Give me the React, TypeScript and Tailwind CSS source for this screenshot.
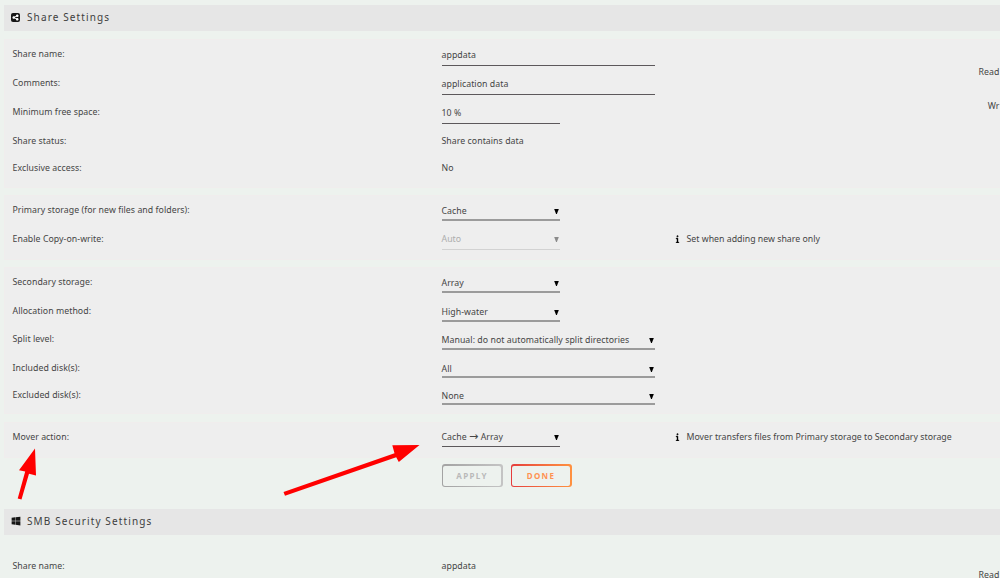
import React from 'react';
import { FaShareNodes, FaWindows, FaInfo } from 'react-icons/fa6';

interface RowProps {
  label: string;
  height?: string;
  note?: string;
  children: React.ReactNode;
}

const Row: React.FC<RowProps> = ({ label, height = 'h-7', note, children }) => (
  <div className={`flex ${height}`}>
    <div className="w-[429px] pt-2 leading-3">{label}</div>
    <div className="w-[233px]">{children}</div>
    {note && (
      <div className="flex items-start pt-2 leading-3">
        <FaInfo className="mt-[2px] mr-[7px] h-2 w-[5px] stroke-black stroke-[24px] text-black" />
        <span className="tracking-[0.002em] whitespace-nowrap">{note}</span>
      </div>
    )}
  </div>
);

interface FieldProps {
  value: React.ReactNode;
  wide?: boolean;
  disabled?: boolean;
  arrow?: boolean;
  height?: string;
  line?: string;
}

const Field: React.FC<FieldProps> = ({
  value,
  wide,
  disabled,
  arrow,
  height = 'h-[25px]',
  line = 'border-b border-[#5c585b] pb-1',
}) => (
  <div
    className={`flex items-end justify-between leading-3 ${height} ${line} ${wide ? 'w-[213px]' : 'w-[118px]'} ${disabled ? 'text-[#adadad]' : ''}`}
  >
    <span className="whitespace-nowrap">{value}</span>
    {arrow && (
      <svg viewBox="0 0 5 5" className={`mr-px mb-[3px] h-[5px] w-[5px] ${disabled ? 'fill-[#8a8a8a]' : 'fill-black'}`}>
        <path d="M0.2 0H4.8L2.9 5H2.1Z" />
      </svg>
    )}
  </div>
);

const Plain: React.FC<{ value: string }> = ({ value }) => (
  <div className="pt-2 leading-3">{value}</div>
);

const Panel: React.FC<{ className: string; children: React.ReactNode }> = ({ className, children }) => (
  <div className={`ml-1 flex border border-r-0 border-[#f0eded] bg-[#eeeeee] pl-[7.5px] ${className}`}>{children}</div>
);

const SectionTitle: React.FC<{ icon: React.ReactNode; title: string }> = ({ icon, title }) => (
  <div className="ml-1 flex h-[26px] items-center bg-[#e6e6e6] pb-[2px] pl-[7px] text-[10px] text-[#3d3d3d]">
    {icon}
    <span className="tracking-[0.112em]">{title}</span>
  </div>
);

const softLine = 'border-b-2 border-[#9b9b9b] pb-[2px]';
const tightLine = 'border-b-2 border-[#9b9b9b] pb-px';

export default function App() {
  return (
    <div className="relative h-[578px] w-[1000px] overflow-hidden bg-[#edf2ee] pt-[5px] font-['Noto_Sans','Liberation_Sans',sans-serif] text-[8.75px] tracking-[0.006em] text-[#454545]">
      <SectionTitle
        title="Share Settings"
        icon={
          <span className="mr-[7px] flex h-[9px] w-[9px] items-center justify-center rounded-[2px] bg-[#161616] text-white">
            <FaShareNodes className="h-[7px] w-[7px]" />
          </span>
        }
      />

      <Panel className="mt-2 h-[149px]">
        <div className="w-[966px]">
          <Row label="Share name:" height="h-[29px]">
            <Field value="appdata" wide height="h-[26px]" />
          </Row>
          <Row label="Comments:" height="h-[29px]">
            <Field value="application data" wide height="h-[26px]" />
          </Row>
          <Row label="Minimum free space:" height="h-[29px]">
            <Field value="10 %" height="h-[26px]" />
          </Row>
          <Row label="Share status:" height="h-[27px]">
            <Plain value="Share contains data" />
          </Row>
          <Row label="Exclusive access:">
            <Plain value="No" />
          </Row>
        </div>
        <div className="flex w-[21px] flex-col items-end pt-[26px] leading-3">
          <span>Read</span>
          <span className="mt-[22px]">Wr</span>
        </div>
      </Panel>

      <Panel className="mt-[7px] h-[65px]">
        <div>
          <Row label="Primary storage (for new files and folders):" height="h-[29px]">
            <Field value="Cache" arrow line={softLine} />
          </Row>
          <Row label="Enable Copy-on-write:" note="Set when adding new share only">
            <Field value="Auto" arrow disabled line="border-b border-[#d2d2d2] pb-1" />
          </Row>
        </div>
      </Panel>

      <Panel className="mt-[7px] h-[147px]">
        <div>
          <Row label="Secondary storage:" height="h-[29px]">
            <Field value="Array" arrow line={softLine} />
          </Row>
          <Row label="Allocation method:">
            <Field value="High-water" arrow line={softLine} />
          </Row>
          <Row label="Split level:" height="h-[29px]">
            <Field value="Manual: do not automatically split directories" wide arrow line={softLine} />
          </Row>
          <Row label="Included disk(s):" height="h-[27px]">
            <Field value="All" wide arrow height="h-6" line={tightLine} />
          </Row>
          <Row label="Excluded disk(s):">
            <Field value="None" wide arrow height="h-6" line={tightLine} />
          </Row>
        </div>
      </Panel>

      <Panel className="mt-2 h-[36px]">
        <div>
          <Row label="Mover action:" note="Mover transfers files from Primary storage to Secondary storage">
            <Field
              value={<>Cache <span className="font-['DejaVu_Sans',sans-serif] text-[11px]">→</span> Array</>}
              arrow
              height="h-6"
              line="border-b border-[#5c585b] pb-[3px]"
            />
          </Row>
        </div>
      </Panel>

      <div className="mt-[6px] ml-[441.5px] flex gap-2">
        <button className="h-[23px] w-[61px] rounded-[3px] bg-linear-to-r from-[#a3a3a3] to-[#c4c4c4] p-[1.5px]">
          <span className="flex h-full items-center justify-center rounded-[2px] bg-[#edf2ee] text-[8px] font-bold tracking-[0.17em] text-[#b9b9b9]">APPLY</span>
        </button>
        <button className="h-[23px] w-[61px] rounded-[3px] bg-linear-to-r from-[#e53c3c] to-[#ff9240] p-[1.5px]">
          <span className="flex h-full items-center justify-center rounded-[2px] bg-[#edf2ee] text-[8px] font-bold tracking-[0.17em] text-[#ff9252]">DONE</span>
        </button>
      </div>

      <div className="mt-[22px]">
        <SectionTitle
          title="SMB Security Settings"
          icon={<FaWindows className="mr-[6px] h-[10px] w-[10px] text-[#161616]" />}
        />
      </div>
      <div className="ml-1 flex pt-[17px] pl-[8.5px]">
        <div className="w-[966px]">
          <Row label="Share name:">
            <Plain value="appdata" />
          </Row>
        </div>
        <div className="flex w-[21px] justify-end pt-5 leading-[6px]">Read</div>
      </div>

      {/* Annotation arrows */}
      <svg className="pointer-events-none absolute inset-0 h-full w-full" viewBox="0 0 1000 578" fill="#ff0000">
        <path d="M17.7 498.5L25.2 471.5L19 470.3L35 448.5L36 475.5L29 473.8L21.5 499.5Z" />
        <path d="M283.5 491.9L394.5 453.2L392.3 445.2L419.5 445L398.8 462L396.2 457.2L285 495.8Z" />
      </svg>
    </div>
  );
}
